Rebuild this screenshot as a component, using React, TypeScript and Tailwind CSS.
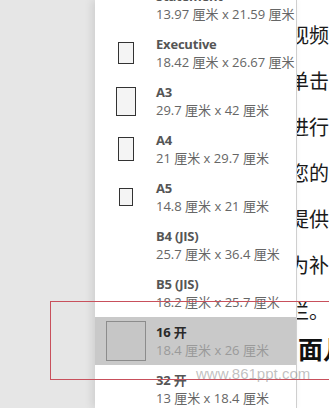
import React from "react";

type Item = { title: string; sub: string; icon?: [number, number]; active?: boolean };

const items: Item[] = [
  { title: "Statement", sub: "13.97 厘米 x 21.59 厘米" },
  { title: "Executive", sub: "18.42 厘米 x 26.67 厘米", icon: [16, 22] },
  { title: "A3", sub: "29.7 厘米 x 42 厘米", icon: [20, 29] },
  { title: "A4", sub: "21 厘米 x 29.7 厘米", icon: [16, 24] },
  { title: "A5", sub: "14.8 厘米 x 21 厘米", icon: [14, 18] },
  { title: "B4 (JIS)", sub: "25.7 厘米 x 36.4 厘米" },
  { title: "B5 (JIS)", sub: "18.2 厘米 x 25.7 厘米" },
  { title: "16 开", sub: "18.4 厘米 x 26 厘米", active: true },
  { title: "32 开", sub: "13 厘米 x 18.4 厘米" },
];

const uiFont = { fontFamily: '"Open Sans", "Noto Sans CJK SC", sans-serif' };
const docFont = { fontFamily: '"Noto Sans CJK SC", "Noto Sans", sans-serif' };

function MenuItem({ item }: { item: Item }) {
  return (
    <div className={`flex h-[48px] shrink-0 ${item.active ? "bg-[#c9c9c9]" : ""}`}>
      <div className="flex w-[61px] shrink-0 items-center justify-center">
        {item.active ? (
          <div className="h-[40px] w-[40px] border border-[#8c8c8c] bg-[#c6c6c6]" />
        ) : item.icon ? (
          <div
            className="border border-[#333] bg-[#f4f4f4]"
            style={{ width: item.icon[0], height: item.icon[1] }}
          />
        ) : null}
      </div>
      <div className="flex flex-col pt-[6px]">
        <div
          className={`text-[13px] font-bold leading-[18px] tracking-[-0.2px] ${item.active ? "text-[#2a2a2a]" : "text-[#555]"}`}
        >
          {item.title}
        </div>
        <div className={`text-[13px] leading-[19px] whitespace-nowrap ${item.active ? "text-[#9a9a9a]" : "text-[#666]"}`}>
          {item.sub}
        </div>
      </div>
    </div>
  );
}

const docLines = ["视频", "单击", "进行", "您的", "提供", "为补", "栏。"];

export default function App() {
  return (
    <div className="relative flex h-[408px] w-[329px] overflow-hidden bg-white" style={uiFont}>
      <div className="w-[95px] shrink-0 bg-[#e6e6e6]" />
      <div className="relative z-10 flex w-[202px] shrink-0 flex-col overflow-hidden border-r border-[#cfcfcf] bg-white shadow-[-3px_0_8px_rgba(0,0,0,0.10)]">
        <div className="mt-[-19px] flex flex-col">
          {items.map((it) => (
            <MenuItem key={it.title} item={it} />
          ))}
        </div>
      </div>
      <div className="relative flex-1 overflow-hidden" style={docFont}>
        <div className="ml-[-8px] mt-[12px] flex flex-col text-[20px] leading-[46px] text-[#1a1a1a] whitespace-nowrap">
          {docLines.map((l) => (
            <div key={l}>{l}</div>
          ))}
          <div className="ml-[9px] mt-[-1px] text-[25px] font-bold leading-[30px] text-[#111]">面几</div>
        </div>
      </div>
      <div className="pointer-events-none absolute left-[50px] top-[301px] z-20 h-[79px] w-[300px] border border-[#c8505c]" />
      <div className="pointer-events-none absolute left-[196px] top-[366px] z-30 text-[15px] leading-[16px] text-[rgba(140,140,140,0.55)]" style={{ fontFamily: '"Liberation Sans", sans-serif' }}>
        www.861ppt.com
      </div>
    </div>
  );
}
